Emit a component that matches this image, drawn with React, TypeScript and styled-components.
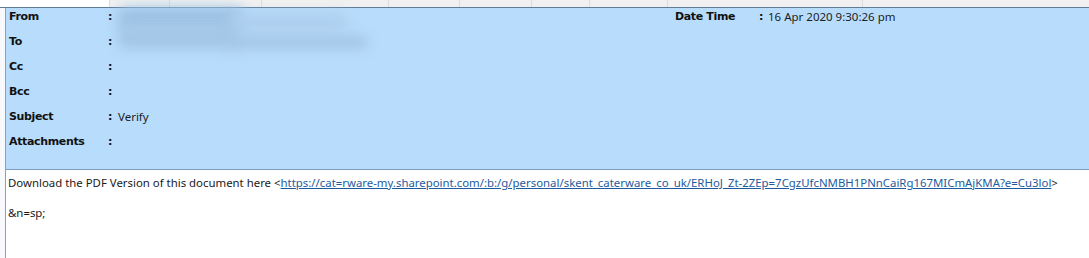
import React from "react";
import styled, { createGlobalStyle } from "styled-components";

const Global = createGlobalStyle`
  html, body { margin: 0; padding: 0; background: #ffffff; }
  body { width: 1089px; height: 258px; overflow: hidden; }
`;

const Page = styled.div`
  display: flex;
  flex-direction: column;
  width: 1089px;
  height: 258px;
  background: #ffffff;
`;

const TopStrip = styled.div`
  display: flex;
  height: 7px;
  background: #f0f0f0;
  border-bottom: 1px solid #5f7d99;
  box-sizing: content-box;
`;

const StripCol = styled.div<{ $w: number; $white?: boolean }>`
  flex: 0 0 ${(p) => p.$w}px;
  height: 100%;
  background: ${(p) => (p.$white ? "#ffffff" : "#f0f0f0")};
  border-right: 1px solid #dcdcdc;
  box-sizing: border-box;
`;

const StripFill = styled.div`
  flex: 1;
  background: #f0f0f0;
`;

const Main = styled.div`
  display: flex;
  flex: 1;
`;

const Gutter = styled.div`
  flex: 0 0 5px;
  background: #f7f9fc;
  border-right: 1px solid #8aa0b8;
`;

const Content = styled.div`
  flex: 1;
  display: flex;
  flex-direction: column;
`;

const HeaderPanel = styled.div`
  background: #b8dcfb;
  border-bottom: 1px solid #7d9ec0;
  height: 162px;
  box-sizing: border-box;
  padding: 2px 0 0 3px;
  display: grid;
  grid-template-columns: 99px 10px 557px 84px 9px 1fr;
  grid-auto-rows: 25px;
  align-content: start;
  font-family: Tahoma, "DejaVu Sans", Verdana, sans-serif;
  font-size: 11px;
  color: #111111;
`;

const Label = styled.div`
  font-weight: bold;
  line-height: 14px;
  letter-spacing: -0.35px;
`;

const Colon = styled.div`
  line-height: 14px;
  font-weight: bold;
`;

const Value = styled.div`
  position: relative;
  line-height: 14px;
  font-family: "Noto Sans", "Open Sans", sans-serif;
  font-size: 11.5px;
  color: #1d1d1d;
`;

const Blur = styled.span<{ $w: number; $h: number; $top: number; $left: number; $c: string }>`
  position: absolute;
  left: ${(p) => p.$left}px;
  top: ${(p) => p.$top}px;
  width: ${(p) => p.$w}px;
  height: ${(p) => p.$h}px;
  background: ${(p) => p.$c};
  filter: blur(6px);
  border-radius: 8px;
`;

const Body = styled.div`
  padding: 5px 0 0 2px;
  font-family: "Noto Sans", "Open Sans", sans-serif;
  font-size: 11.4px;
  line-height: 15px;
  color: #1a1a1a;
`;

const Para = styled.p`
  margin: 0 0 15px 0;
  white-space: nowrap;
`;

const Link = styled.a`
  color: #1e5b9e;
  text-decoration: underline;
`;

const stripCols = [110, 60, 92, 127, 71, 72, 58, 78, 195];

const rows: { label: string; value?: React.ReactNode }[] = [
  { label: "From" },
  { label: "To" },
  { label: "Cc" },
  { label: "Bcc" },
  { label: "Subject", value: "Verify" },
  { label: "Attachments" },
];

export default function App() {
  return (
    <>
      <Global />
      <Page>
        <TopStrip>
          {stripCols.map((w, i) => (
            <StripCol key={i} $w={w} $white={i === 0} />
          ))}
          <StripFill />
        </TopStrip>
        <Main>
          <Gutter />
          <Content>
            <HeaderPanel>
              {rows.map((r, i) => (
                <React.Fragment key={r.label}>
                  <Label>{r.label}</Label>
                  <Colon>:</Colon>
                  <Value>
                    {i === 0 && (
                      <>
                        <Blur $left={0} $w={125} $h={24} $top={-3} $c="#9fc3e4" />
                        <Blur $left={110} $w={120} $h={16} $top={4} $c="#aecfee" />
                      </>
                    )}
                    {i === 1 && (
                      <>
                        <Blur $left={0} $w={120} $h={22} $top={-8} $c="#a3c6e6" />
                        <Blur $left={110} $w={140} $h={14} $top={0} $c="#a4c6e6" />
                      </>
                    )}
                    {r.value}
                  </Value>
                  {i === 0 ? (
                    <>
                      <Label>Date Time</Label>
                      <Colon>:</Colon>
                      <Value>16 Apr 2020 9:30:26 pm</Value>
                    </>
                  ) : (
                    <>
                      <div />
                      <div />
                      <div />
                    </>
                  )}
                </React.Fragment>
              ))}
            </HeaderPanel>
            <Body>
              <Para>
                Download the PDF Version of this document here &lt;
                <Link href="#">
                  https://cat=rware-my.sharepoint.com/:b:/g/personal/skent_caterware_co_uk/ERHoJ_Zt-2ZEp=7CgzUfcNMBH1PNnCaiRg167MICmAjKMA?e=Cu3lol
                </Link>
                &gt;
              </Para>
              <Para>&amp;n=sp;</Para>
            </Body>
          </Content>
        </Main>
      </Page>
    </>
  );
}
